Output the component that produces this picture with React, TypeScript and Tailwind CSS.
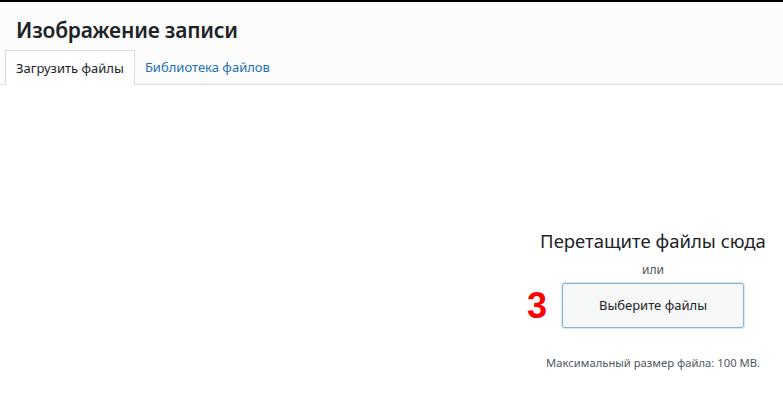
export default function App() {
  return (
    <div
      className="relative h-[412px] w-[783px] overflow-hidden bg-white text-[#1d2327]"
      style={{ fontFamily: '"Noto Sans", "Open Sans", sans-serif' }}
    >
      <div className="border-t-2 border-black bg-[#fcfcfc]">
        <h1 className="pl-4 pt-[13px] text-[21px] font-semibold leading-[30px] tracking-[-0.2px]">
          Изображение записи
        </h1>
        <div className="mt-[5px] flex border-b border-[#dcdcde] pl-[5px]">
          <div className="-mb-px border border-b-0 border-[#dcdcde] bg-white px-[10px] text-[13px] leading-[34px]">
            Загрузить файлы
          </div>
          <div className="px-[10px] text-[13px] leading-[34px] text-[#2271b1]">Библиотека файлов</div>
        </div>
      </div>

      <div className="flex pt-[144px]">
        <div className="relative ml-auto flex w-[260px] flex-col items-center">
          <p className="text-[18.5px] leading-[24px]">Перетащите файлы сюда</p>
          <p className="mt-[9px] text-[12px] leading-[16px] text-[#50575e]">или</p>
          <button className="mt-[5px] h-[45px] w-[182px] rounded-[3px] border border-[#8bb3d6] bg-[#f6f7f7] text-[13px] shadow-[0_0_0_1px_#d6e6f4]">
            Выберите файлы
          </button>
          <p className="mt-[27px] text-[11.25px] leading-[16px] text-[#50575e]">
            Максимальный размер файла: 100 MB.
          </p>
          <span
            className="absolute left-[4px] top-[59px] text-[36px] font-bold leading-none text-[#ff0000]"
            style={{ fontFamily: '"Liberation Sans", Arial, sans-serif' }}
          >
            3
          </span>
        </div>
      </div>
    </div>
  )
}
